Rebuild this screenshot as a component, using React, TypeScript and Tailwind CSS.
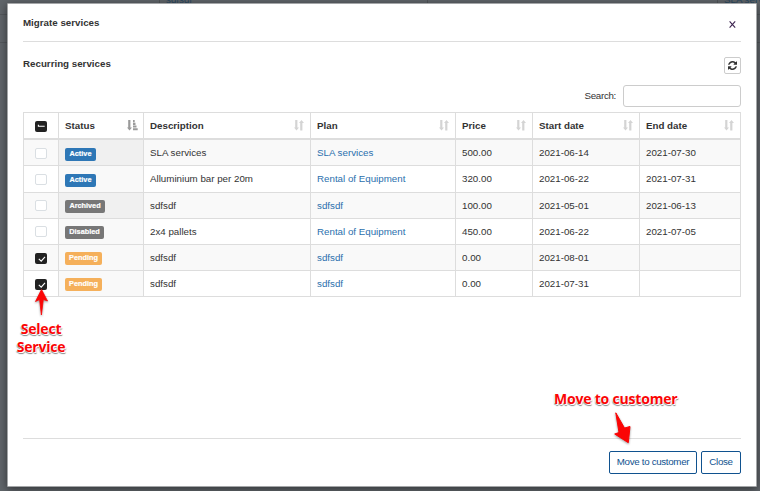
import React from "react";

type Row = {
  checked: boolean;
  status: "Active" | "Archived" | "Disabled" | "Pending";
  description: string;
  plan: string;
  price: string;
  start: string;
  end: string;
  height: string;
  checkPad: string;
  badgePad: string;
};

const rows: Row[] = [
  { checked: false, status: "Active", description: "SLA services", plan: "SLA services", price: "500.00", start: "2021-06-14", end: "2021-07-30", height: "h-[26px]", checkPad: "pt-2", badgePad: "pt-2" },
  { checked: false, status: "Active", description: "Alluminium bar per 20m", plan: "Rental of Equipment", price: "320.00", start: "2021-06-22", end: "2021-07-31", height: "h-[27px]", checkPad: "pt-2", badgePad: "pt-2" },
  { checked: false, status: "Archived", description: "sdfsdf", plan: "sdfsdf", price: "100.00", start: "2021-05-01", end: "2021-06-13", height: "h-[26px]", checkPad: "pt-[7px]", badgePad: "pt-[7px]" },
  { checked: false, status: "Disabled", description: "2x4 pallets", plan: "Rental of Equipment", price: "450.00", start: "2021-06-22", end: "2021-07-05", height: "h-[26px]", checkPad: "pt-[7px]", badgePad: "pt-[7px]" },
  { checked: true, status: "Pending", description: "sdfsdf", plan: "sdfsdf", price: "0.00", start: "2021-08-01", end: "", height: "h-[26px]", checkPad: "pt-2", badgePad: "pt-[7px]" },
  { checked: true, status: "Pending", description: "sdfsdf", plan: "sdfsdf", price: "0.00", start: "2021-07-31", end: "", height: "h-[26px]", checkPad: "pt-2", badgePad: "pt-[7px]" },
];

const badge = {
  Active: "bg-[#2e77b6] w-[31px]",
  Archived: "bg-[#777777] w-[40px]",
  Disabled: "bg-[#777777] w-[39px]",
  Pending: "bg-[#f5b05b] w-[37px]",
};

const columns = ["Description", "Plan", "Price", "Start date", "End date"];

const grid = "grid grid-cols-[35px_85px_167px_145px_77px_107px_101px]";
const cell = "border-r border-[#dddddd] flex items-start pl-[6px] pt-[7px]";

function SortBoth() {
  return (
    <svg width="10" height="11" viewBox="0 0 10 11" fill="#d4d4d4">
      <path d="M1.2 0h2.200v7.500H5L2.500 10.500 0 7.500h1.200z" />
      <path d="M6.200 10.500h2.200V3H10L7.500 0 5 3h1.200z" />
    </svg>
  );
}

function SortAsc() {
  return (
    <svg width="11" height="11" viewBox="0 0 11 11" fill="#9a9a9a">
      <path d="M1.200 0h2.200v7.500H5L2.500 10.500 0 7.500h1.200z" />
      <path d="M6 0h1.700v2.200H6zM6 2.800h2.500v2.100H6zM6 5.500h3.500v2.100H6zM6 8.200h4.700v2.100H6z" />
    </svg>
  );
}

function Check({ state }: { state: "on" | "off" | "mixed" }) {
  if (state === "off") {
    return <span className="block h-[11px] w-3 rounded-[2px] border border-[#dadfe3] bg-white" />;
  }
  return (
    <span className="block h-[11px] w-3 rounded-[2px] bg-[#222222]">
      <svg width="12" height="11" viewBox="0 0 12 11" fill="none" stroke="#fff" strokeWidth="1.1">
        {state === "on" ? <path d="M3.8 5.800 6.200 8.100 10 3.800" /> : <path d="M3.400 3.800v1.500h6.300" />}
      </svg>
    </span>
  );
}

const callout =
  "absolute font-['Open_Sans',sans-serif] text-[14px] font-bold leading-[18px] tracking-[-0.2px] text-[#fb0505] [text-shadow:0_0_1px_#fff,1px_1px_0_#fff,-1px_-1px_0_#fff,1px_2px_1px_#888,-1px_1px_1px_#aaa]";

export default function App() {
  return (
    <div className="relative h-[491px] w-[760px] overflow-hidden bg-[#60656a] pl-[7px] pt-[3px] font-['Liberation_Sans',Arial,sans-serif] text-[9.75px] leading-3 text-[#333333]">
      <div className="absolute left-0 top-[14px] h-px w-full bg-[#54585c]" />
      <div className="absolute left-0 top-[42px] h-px w-full bg-[#54585c]" />
      <div className="absolute left-[159px] top-0 h-[3px] w-px bg-[#505458]" />
      <div className="absolute left-[427px] top-0 h-[3px] w-px bg-[#505458]" />
      <div className="absolute left-[717px] top-0 h-[3px] w-px bg-[#505458]" />
      <span className="absolute -top-[6px] left-[166px] text-[#294860]">sdfsdf</span>
      <span className="absolute -top-[6px] left-[724px] whitespace-nowrap text-[#294860]">SLA services</span>

      <div className="relative flex h-[484px] w-[750px] flex-col rounded-[1px] border border-[#a4a6a8] bg-white px-[15px] shadow-[0_2px_8px_rgba(0,0,0,0.5)]">
        <div className="flex h-[38px] shrink-0 items-start justify-between border-b border-[#dddddd] pr-[5px] pt-[13px]">
          <h1 className="font-bold">Migrate services</h1>
          <svg className="mt-1" width="7" height="7" viewBox="0 0 7 7" stroke="#3d2450" strokeWidth="1.1">
            <path d="M.6.4l5.600 6.200M6.200.4L.6 6.600" />
          </svg>
        </div>

        <div className="flex h-[47px] shrink-0 items-center justify-between">
          <h2 className="pb-[3px] font-bold">Recurring services</h2>
          <button className="flex size-[17px] items-center justify-center rounded-[2px] border border-[#cccccc] bg-white">
            <svg width="9" height="9" viewBox="0 0 1536 1536" fill="#333">
              <path d="M1511 928q0 5-1 7-64 268-268 434.500T764 1536q-146 0-282.500-55T238 1324l-129 129q-19 19-45 19t-45-19-19-45V960q0-26 19-45t45-19h448q26 0 45 19t19 45-19 45l-137 137q71 66 161 102t187 36q134 0 250-65t186-179q11-17 53-117 8-23 30-23h192q13 0 22.500 9.500t9.500 22.500zm25-800v448q0 26-19 45t-45 19h-448q-26 0-45-19t-19-45 19-45l138-138Q969 256 768 256q-134 0-250 65T332 500q-11 17-53 117-8 23-30 23H50q-13 0-22.500-9.500T18 608v-7q65-268 270-434.500T768 0q146 0 284 55.500T1297 212l130-129q19-19 45-19t45 19 19 45z" />
            </svg>
          </button>
        </div>

        <div className="-mt-[4px] flex h-[22px] shrink-0 items-center justify-end gap-[7px]">
          <label htmlFor="search" className="tracking-[-0.3px]">Search:</label>
          <input id="search" className="h-[22px] w-[118px] rounded-[3px] border border-[#cccccc] bg-white" />
        </div>

        <div className="mt-[5px] w-[718px] shrink-0 border-l border-t border-[#dddddd]">
          <div className={`${grid} h-[27px] border-b-2 border-[#dddddd] font-bold`}>
            <div className="flex items-start justify-center border-r border-[#dddddd] pt-2">
              <Check state="mixed" />
            </div>
            <div className={`${cell} justify-between pr-[5px]`}>
              <span>Status</span>
              <SortAsc />
            </div>
            {columns.map((c) => (
              <div key={c} className={`${cell} justify-between pr-[6px]`}>
                <span>{c}</span>
                <SortBoth />
              </div>
            ))}
          </div>
          {rows.map((r, i) => (
            <div key={i} className={`${grid} ${r.height} border-b border-[#dddddd] ${i % 2 === 0 ? "bg-[#f9f9f9]" : "bg-white"}`}>
              <div className={`flex items-start justify-center border-r border-[#dddddd] ${r.checkPad}`}>
                <Check state={r.checked ? "on" : "off"} />
              </div>
              <div className={`flex items-start border-r border-[#dddddd] pl-[6px] ${r.badgePad} ${i > 3 ? "bg-[#f9f9f9]" : i % 2 === 0 ? "bg-[#f0f0f0]" : "bg-[#f9f9f9]"}`}>
                <span className={`${badge[r.status]} flex h-[13px] items-center justify-center rounded-[2px] pb-px text-[7.3px] font-bold leading-none text-white [-webkit-text-stroke:0.2px_white]`}>
                  {r.status}
                </span>
              </div>
              <div className={cell}>{r.description}</div>
              <div className={`${cell} text-[#2a6fad]`}>{r.plan}</div>
              <div className={cell}>{r.price}</div>
              <div className={cell}>{r.start}</div>
              <div className={cell}>{r.end}</div>
            </div>
          ))}
        </div>

        <div className="mt-auto flex h-[48px] shrink-0 items-start justify-end gap-1 border-t border-[#dddddd] pt-3 tracking-[-0.32px] text-[#10528f]">
          <button className="h-[23px] w-[88px] whitespace-nowrap rounded-[2px] border border-[#10528f] bg-white pb-px">Move to customer</button>
          <button className="h-[23px] w-[40px] rounded-[2px] border border-[#10528f] bg-white pb-px">Close</button>
        </div>
      </div>

      <div className={`${callout} left-[10px] top-[320px] w-[62px] text-center`}>Select Service</div>
      <div className={`${callout} left-[554px] top-[390px] whitespace-nowrap`}>Move to customer</div>
      <svg className="absolute left-[34px] top-[288px] drop-shadow-[0_1px_1px_rgba(0,0,0,0.4)]" width="15" height="29" viewBox="0 0 15 29" fill="#fb0505" stroke="#fb0505" strokeWidth="0.8" strokeLinejoin="round">
        <path d="M7.500 1.500 13.500 13 9.300 11.500 7.400 27 5.600 11.500 1.500 13.500z" />
      </svg>
      <svg className="absolute left-[612px] top-[410px] drop-shadow-[0_1px_1px_rgba(0,0,0,0.4)]" width="20" height="35" viewBox="0 0 20 35" fill="#fb0505" stroke="#fb0505" strokeWidth="1" strokeLinejoin="round">
        <path d="M3.800 2.800 12.500 18 18 16.500 16.300 32.700 2.700 24 7 22.500z" />
      </svg>
    </div>
  );
}
